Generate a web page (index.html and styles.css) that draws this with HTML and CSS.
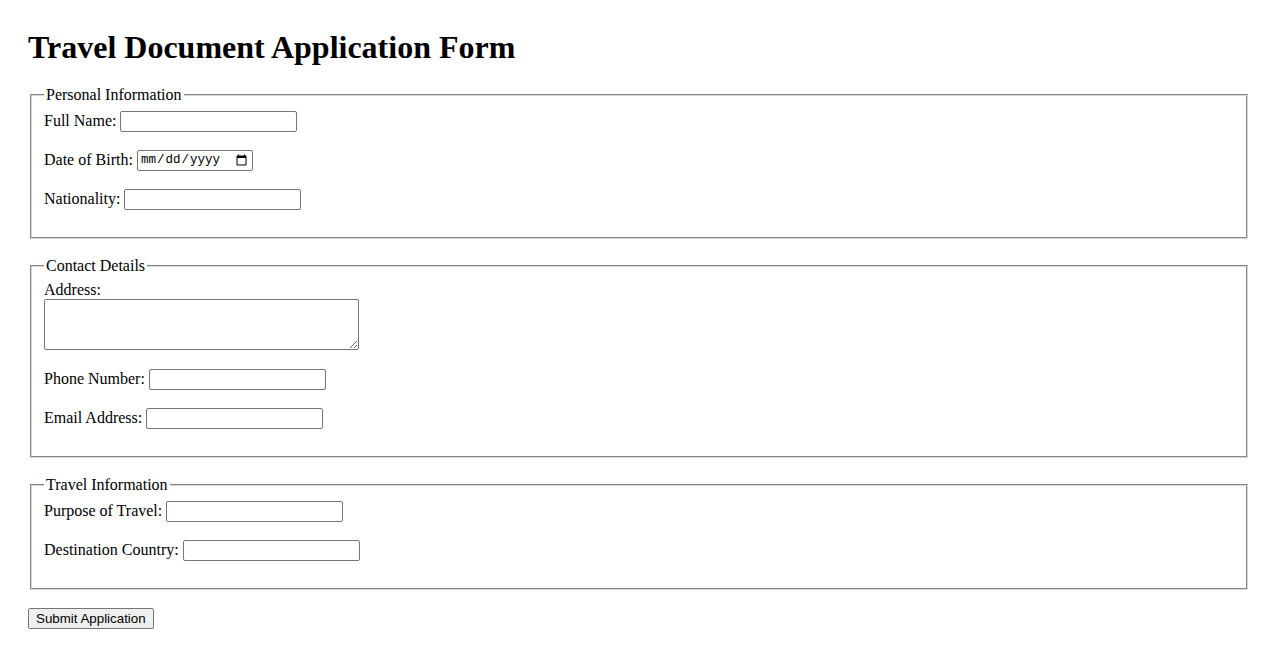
FILE: index.html
```html
<!DOCTYPE html>
<html lang="en">
<head>
<meta charset="utf-8">
<title>Travel Document Application Form</title>
<link rel="stylesheet" href="styles.css">
</head>
<body>
<h1 class="title">Travel Document Application Form</h1>
<form class="app-form">
  <fieldset class="section">
    <legend class="section-legend">Personal Information</legend>
    <div class="row">
      <label for="fullName">Full Name:</label>
      <input class="field" type="text" id="fullName">
    </div>
    <div class="row">
      <label for="dob">Date of Birth:</label>
      <input class="field date" type="date" id="dob">
    </div>
    <div class="row">
      <label for="nationality">Nationality:</label>
      <input class="field" type="text" id="nationality">
    </div>
  </fieldset>

  <fieldset class="section">
    <legend class="section-legend">Contact Details</legend>
    <div class="row-stack">
      <label for="address">Address:</label>
      <textarea class="area" id="address" rows="3"></textarea>
    </div>
    <div class="row">
      <label for="phone">Phone Number:</label>
      <input class="field" type="tel" id="phone">
    </div>
    <div class="row">
      <label for="email">Email Address:</label>
      <input class="field" type="email" id="email">
    </div>
  </fieldset>

  <fieldset class="section">
    <legend class="section-legend">Travel Information</legend>
    <div class="row">
      <label for="purpose">Purpose of Travel:</label>
      <input class="field" type="text" id="purpose">
    </div>
    <div class="row">
      <label for="destination">Destination Country:</label>
      <input class="field" type="text" id="destination">
    </div>
  </fieldset>

  <button class="submit" type="submit">Submit Application</button>
</form>
</body>
</html>
```

FILE: styles.css
```css
body {
  margin: 0;
  padding: 8px 28px 28px 28px;
  font-family: "Liberation Serif", "Times New Roman", serif;
  font-size: 16px;
  color: #000;
  background: #fff;
}

.title {
  font-size: 32px;
  font-weight: bold;
  line-height: 37px;
  margin: 21.44px 0 19.5px 0;
}

.app-form {
  margin: 0;
}

.section {
  margin: 0 2px 18.5px 2px;
  padding: 5.6px 12px 10px 12px;
  border: 2px groove #d8d8d8;
}

.section-legend {
  padding: 0 2px;
}

.row {
  display: flex;
  align-items: center;
  gap: 4px;
  height: 23px;
  margin-bottom: 16px;
}

.row-stack {
  display: flex;
  flex-direction: column;
  align-items: flex-start;
  margin-bottom: 18px;
}

.field {
  box-sizing: border-box;
  width: 177px;
  height: 21px;
  padding: 1px 2px;
  border: 1px solid #767676;
  border-radius: 2px;
  font-family: "Liberation Sans", Arial, sans-serif;
  font-size: 13.33px;
  margin: 0;
}

.field.date {
  width: 116px;
  font-family: "Liberation Mono", "Courier New", monospace;
  font-size: 12.5px;
}

.area {
  box-sizing: border-box;
  display: block;
  width: 315px;
  height: 51px;
  margin: 0;
  padding: 2px;
  border: 1px solid #767676;
  border-radius: 2px;
  font-family: "Liberation Mono", monospace;
  font-size: 13.33px;
}

.submit {
  box-sizing: border-box;
  height: 21px;
  padding: 1px 7px;
  border: 1px solid #767676;
  border-radius: 2px;
  background: #efefef;
  font-family: "Liberation Sans", Arial, sans-serif;
  font-size: 13.33px;
  color: #000;
}
```
